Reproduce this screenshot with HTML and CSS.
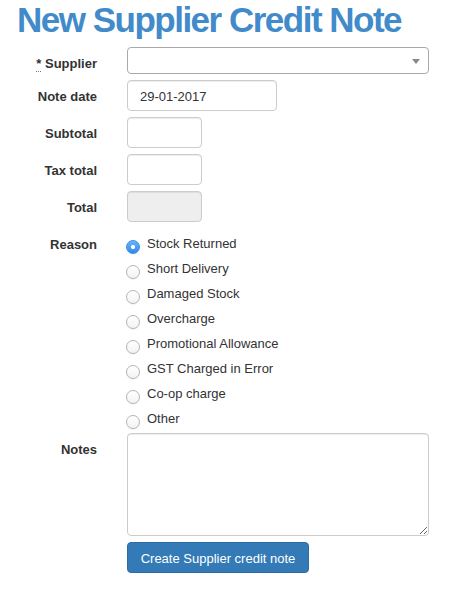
FILE: index.html
```html
<!DOCTYPE html>
<html>
<head>
<meta charset="utf-8">
<title>New Supplier Credit Note</title>
<link rel="stylesheet" href="styles.css">
</head>
<body>
<div class="page">
  <h1 class="title">New Supplier Credit Note</h1>
  <form class="form">
    <label class="label"><abbr class="req" title="required">*</abbr> Supplier</label>
    <div class="field">
      <div class="select"><span class="select-arrow"></span></div>
    </div>

    <label class="label">Note date</label>
    <div class="field"><input class="input input-date" type="text" value="29-01-2017"></div>

    <label class="label">Subtotal</label>
    <div class="field"><input class="input input-num" type="text"></div>

    <label class="label">Tax total</label>
    <div class="field"><input class="input input-num" type="text"></div>

    <label class="label">Total</label>
    <div class="field"><input class="input input-num input-readonly" type="text" readonly></div>

    <label class="label">Reason</label>
    <div class="field radios">
      <label class="radio"><input type="radio" name="reason" checked><span>Stock Returned</span></label>
      <label class="radio"><input type="radio" name="reason"><span>Short Delivery</span></label>
      <label class="radio"><input type="radio" name="reason"><span>Damaged Stock</span></label>
      <label class="radio"><input type="radio" name="reason"><span>Overcharge</span></label>
      <label class="radio"><input type="radio" name="reason"><span>Promotional Allowance</span></label>
      <label class="radio"><input type="radio" name="reason"><span>GST Charged in Error</span></label>
      <label class="radio"><input type="radio" name="reason"><span>Co-op charge</span></label>
      <label class="radio"><input type="radio" name="reason"><span>Other</span></label>
    </div>

    <label class="label">Notes</label>
    <div class="field"><textarea class="textarea"></textarea></div>

    <span class="label"></span>
    <div class="field"><button class="btn" type="button">Create Supplier credit note</button></div>
  </form>
</div>
</body>
</html>
```
FILE: styles.css
```css
* { box-sizing: border-box; }

html, body {
  margin: 0;
  padding: 0;
  background: #fff;
}

body {
  font-family: "Liberation Sans", Arial, Helvetica, sans-serif;
  font-size: 13px;
  line-height: 1.42857;
  color: #333;
}

.page {
  padding: 0 0 0 15px;
}

.title {
  margin: 0 0 7px 2px;
  font-size: 35px;
  line-height: 1.15;
  font-weight: bold;
  letter-spacing: -1.5px;
  color: #428bca;
}

.form {
  display: grid;
  grid-template-columns: 82px 302px;
  column-gap: 30px;
  row-gap: 6px;
  align-items: start;
}

.label {
  display: block;
  text-align: right;
  font-weight: bold;
  padding-top: 8px;
  color: #333;
}

.req {
  text-decoration: none;
  border-bottom: 1px dotted #777;
  cursor: help;
}

.field {
  display: block;
}

.select {
  position: relative;
  height: 27px;
  border: 1px solid #aaa;
  border-radius: 4px;
  background: #fff;
}

.select-arrow {
  position: absolute;
  right: 8px;
  top: 11px;
  width: 0;
  height: 0;
  border-style: solid;
  border-width: 5px 4px 0 4px;
  border-color: #888 transparent transparent transparent;
}

.input {
  display: block;
  height: 31px;
  padding: 7px 12px 5px;
  font-family: inherit;
  font-size: 13px;
  color: #555;
  background: #fff;
  border: 1px solid #ccc;
  border-radius: 4px;
  box-shadow: inset 0 1px 1px rgba(0, 0, 0, 0.075);
  outline: none;
}

.input-date {
  width: 150px;
  color: #333;
}

.input-num {
  width: 75px;
}

.input-readonly {
  background: #eee;
}

.radios {
  display: flex;
  flex-direction: column;
  margin-bottom: -1px;
}

.radio {
  display: flex;
  align-items: flex-start;
  height: 25px;
  padding-top: 7px;
  line-height: 18px;
  color: #333;
  font-weight: normal;
}

.radio input {
  appearance: none;
  -webkit-appearance: none;
  flex: none;
  width: 14px;
  height: 14px;
  margin: 5px 7px 0 -1px;
  border-radius: 50%;
  border: 1px solid #b4b4b4;
  background: linear-gradient(#ffffff, #f3f3f3);
  box-shadow: 0 1px 1px rgba(0, 0, 0, 0.05);
}

.radio input:checked {
  border-color: #3a8ee6;
  background: radial-gradient(circle, #ffffff 0, #ffffff 1.8px, transparent 2.3px), linear-gradient(#6cb3fa, #2f89f0);
}

.textarea {
  display: block;
  width: 302px;
  height: 103px;
  padding: 6px 12px;
  font-family: inherit;
  font-size: 13px;
  border: 1px solid #ccc;
  border-radius: 4px;
  box-shadow: inset 0 1px 1px rgba(0, 0, 0, 0.075);
  resize: vertical;
  outline: none;
}

.btn {
  display: block;
  height: 31px;
  width: 182px;
  padding: 7px 12px 5px;
  font-family: inherit;
  font-size: 13px;
  line-height: 18px;
  color: #fff;
  background: #337ab7;
  border: 1px solid #2e6da4;
  border-radius: 4px;
  cursor: pointer;
}
```
